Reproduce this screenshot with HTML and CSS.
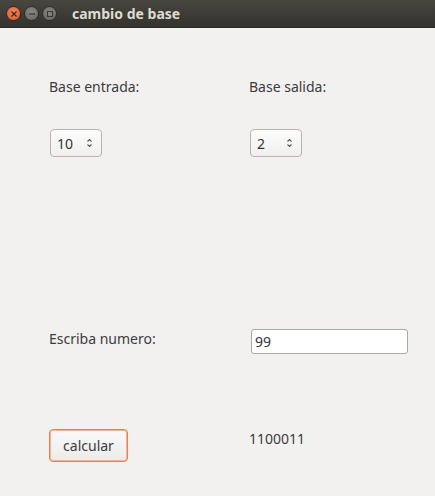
FILE: index.html
```html
<!DOCTYPE html>
<html>
<head>
<meta charset="utf-8">
<link rel="stylesheet" href="styles.css">
</head>
<body>
<div class="titlebar">
  <div class="controls">
    <span class="wbtn close"><svg width="8" height="8" viewBox="0 0 8 8"><path d="M1.5 1.5L6.5 6.5M6.5 1.5L1.5 6.5" stroke="#3a2a22" stroke-width="1.3"/></svg></span>
    <span class="wbtn"><svg width="8" height="8" viewBox="0 0 8 8"><path d="M1 4H7" stroke="#3a3936" stroke-width="1.3"/></svg></span>
    <span class="wbtn"><svg width="8" height="8" viewBox="0 0 8 8"><rect x="1.5" y="1.5" width="5" height="5" fill="none" stroke="#3a3936" stroke-width="1.1"/></svg></span>
  </div>
  <div class="title">cambio de base</div>
</div>
<div class="content">
  <div class="row row-labels">
    <div class="cell">Base entrada:</div>
    <div class="cell">Base salida:</div>
  </div>
  <div class="row row-spin">
    <div class="cell"><div class="spin"><span>10</span><svg width="7" height="12" viewBox="0 0 7 12"><path d="M1.5 4.5L3.5 2.5L5.5 4.5M1.5 7.5L3.5 9.5L5.5 7.5" fill="none" stroke="#555" stroke-width="1.1"/></svg></div></div>
    <div class="cell"><div class="spin"><span>2</span><svg width="7" height="12" viewBox="0 0 7 12"><path d="M1.5 4.5L3.5 2.5L5.5 4.5M1.5 7.5L3.5 9.5L5.5 7.5" fill="none" stroke="#555" stroke-width="1.1"/></svg></div></div>
  </div>
  <div class="row row-entry">
    <div class="cell label-pad">Escriba numero:</div>
    <div class="cell"><div class="entry">99</div></div>
  </div>
  <div class="row row-calc">
    <div class="cell"><div class="button">calcular</div></div>
    <div class="cell result">1100011</div>
  </div>
</div>
</body>
</html>
```
FILE: styles.css
```css
html, body {
  margin: 0;
  padding: 0;
  background: #f2f1f0;
  font-family: "Noto Sans", "Open Sans", sans-serif;
  font-size: 14px;
  color: #3c3c3c;
}
.titlebar {
  height: 28px;
  background: linear-gradient(#47463f, #3b3a35 60%, #34332e);
  display: flex;
  align-items: center;
  border-bottom: 1px solid #2a2926;
  box-sizing: border-box;
}
.controls {
  display: flex;
  gap: 3px;
  padding-left: 6px;
}
.wbtn {
  width: 15px;
  height: 15px;
  border-radius: 50%;
  background: radial-gradient(circle at 50% 40%, #8a8984, #64635f);
  border: 1px solid #2f2e2b;
  box-sizing: border-box;
  display: flex;
  align-items: center;
  justify-content: center;
}
.wbtn.close {
  background: radial-gradient(circle at 50% 40%, #f58a5e, #e0542a);
  border-color: #3a2a22;
}
.title {
  margin-left: 15px;
  color: #dfdbd2;
  font-weight: bold;
  font-size: 14px;
}
.content {
  padding-left: 49px;
}
.row {
  display: grid;
  grid-template-columns: 200px 1fr;
}
.row-labels {
  padding-top: 49px;
  line-height: 19px;
}
.row-spin {
  margin-top: 33px;
}
.row-entry {
  margin-top: 172px;
}
.row-calc {
  margin-top: 75px;
}
.spin {
  width: 52px;
  height: 28px;
  box-sizing: border-box;
  border: 1px solid #b8b5b0;
  border-radius: 4px;
  background: linear-gradient(#fdfdfd, #f0efee);
  display: flex;
  align-items: center;
  justify-content: space-between;
  padding: 0 8px 0 6px;
  margin-left: 1px;
  color: #333;
}
.label-pad {
  line-height: 19px;
}
.entry {
  width: 157px;
  height: 25px;
  box-sizing: border-box;
  border: 1px solid #aaa8a3;
  border-radius: 3px;
  background: #fff;
  padding-left: 3px;
  line-height: 23px;
  margin-left: 2px;
  color: #333;
}
.button {
  width: 79px;
  height: 33px;
  box-sizing: border-box;
  border: 1px solid #ec7d4f;
  border-radius: 4px;
  background: linear-gradient(#fafafa, #ecebea);
  box-shadow: inset 0 0 0 1px #f5b497;
  display: flex;
  align-items: center;
  justify-content: center;
  color: #3c3c3c;
}
.result {
  line-height: 19px;
}
```
